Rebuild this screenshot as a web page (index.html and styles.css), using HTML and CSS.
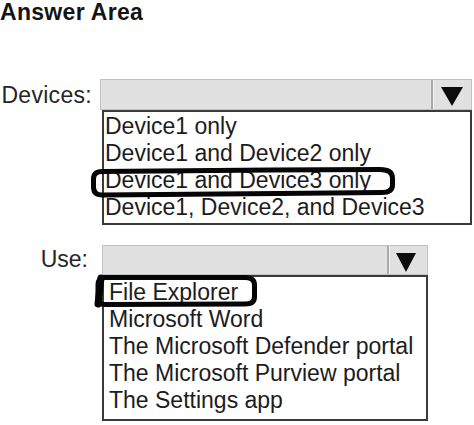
FILE: index.html
```html
<!DOCTYPE html>
<html>
<head>
<meta charset="utf-8">
<link rel="stylesheet" href="styles.css">
</head>
<body>
<div class="page">
  <h1 class="title">Answer Area</h1>

  <div class="row row-devices">
    <div class="label">Devices:</div>
    <div class="field field-devices">
      <div class="select select-devices">
        <div class="select-value"></div>
        <div class="select-arrow"><span class="tri"></span></div>
      </div>
      <ul class="options options-devices">
        <li>Device1 only</li>
        <li>Device1 and Device2 only</li>
        <li class="picked">Device1 and Device3 only<svg class="ring ring-devices" width="306" height="31" viewBox="0 0 306 31"><path d="M12 4.5 C90 3.5 200 3 290 2.5 Q302.5 2.5 302.5 11 L302.5 18 Q302.5 25.5 292 25.5 C200 26.5 90 27.5 12 28 Q3.5 28 3.5 20 L3.5 12 Q3.5 4.5 12 4.5 Z"/></svg></li>
        <li>Device1, Device2, and Device3</li>
      </ul>
    </div>
  </div>

  <div class="row row-use">
    <div class="label">Use:</div>
    <div class="field field-use">
      <div class="select select-use">
        <div class="select-value"></div>
        <div class="select-arrow"><span class="tri"></span></div>
      </div>
      <ul class="options options-use">
        <li class="picked">File Explorer<svg class="ring ring-use" width="166" height="34" viewBox="0 0 166 34"><path class="ring-left" d="M8 4 L5 30"/><path d="M12 3.5 L152 3.5 Q161.5 3.5 161.5 11 L161.5 23 Q161.5 30 152 30 L12 30.5 Q5 30.5 5 23 L5 11 Q5 3.5 12 3.5 Z"/></svg></li>
        <li>Microsoft Word</li>
        <li>The Microsoft Defender portal</li>
        <li>The Microsoft Purview portal</li>
        <li>The Settings app</li>
      </ul>
    </div>
  </div>
</div>
</body>
</html>
```

FILE: styles.css
```css
html, body {
  margin: 0;
  padding: 0;
  background: #ffffff;
}

body {
  font-family: "Liberation Sans", Arial, sans-serif;
  color: #1e1e1e;
}

.page {
  width: 474px;
  height: 425px;
  overflow: hidden;
}

.title {
  margin: 0;
  font-size: 23px;
  line-height: 25px;
  font-weight: bold;
  letter-spacing: 0.3px;
  color: #141414;
}

.row {
  display: grid;
  grid-template-columns: 92px auto;
  column-gap: 8px;
  align-items: start;
}

.row-devices {
  margin-top: 54px;
}

.row-use {
  margin-top: 20px;
}

.label {
  text-align: right;
  font-size: 23px;
  line-height: 23px;
  color: #262626;
}

.row-devices .label {
  padding-top: 5px;
  letter-spacing: 0.3px;
}

.row-use .label {
  padding-top: 3px;
  padding-right: 4px;
}

.field-devices {
  width: 372px;
}

.field-use {
  width: 326px;
  margin-left: 2px;
}

.select {
  display: flex;
  box-sizing: border-box;
  background: #e1e1e1;
  border: 1px solid #c2c2c2;
}

.select-devices {
  height: 31px;
}

.select-use {
  height: 30px;
}

.select-value {
  flex: 1;
}

.select-arrow {
  display: flex;
  align-items: center;
  justify-content: center;
  border-left: 2px solid #a9a9a9;
  box-shadow: inset 1px 0 0 #f2f2f2;
}

.select-devices .select-arrow {
  width: 38px;
}

.select-use .select-arrow {
  width: 40px;
  padding-right: 4px;
  box-sizing: border-box;
}

.tri {
  display: block;
  width: 0;
  height: 0;
  border-left: 11px solid transparent;
  border-right: 11px solid transparent;
  border-top: 19px solid #0c0c0c;
  margin-top: 3px;
}

.select-use .tri {
  border-left-width: 10px;
  border-right-width: 10px;
  margin-top: 5px;
}

.options {
  list-style: none;
  margin: 0;
  box-sizing: border-box;
  border: 2px solid #3a3a3a;
  font-size: 23px;
  line-height: 27px;
  color: #1c1c1c;
  background: #ffffff;
}

.options li {
  position: relative;
  white-space: nowrap;
}

.options-devices {
  margin-left: 2px;
  padding: 1px 0 2px 0;
  height: 115px;
}

.options-devices li {
  padding-left: 1px;
}

.options-use {
  padding: 2px 0 5px 0;
  height: 146px;
}

.options-use li {
  padding-left: 5px;
}

.ring {
  position: absolute;
  overflow: visible;
}

.ring path {
  fill: none;
  stroke: #050505;
  stroke-width: 5;
  stroke-linejoin: round;
  stroke-linecap: round;
}

.ring-devices {
  left: -14px;
  top: 0px;
}

.ring-use {
  left: -11px;
  top: -5px;
}

.ring-use .ring-left {
  stroke-width: 7;
}
```
